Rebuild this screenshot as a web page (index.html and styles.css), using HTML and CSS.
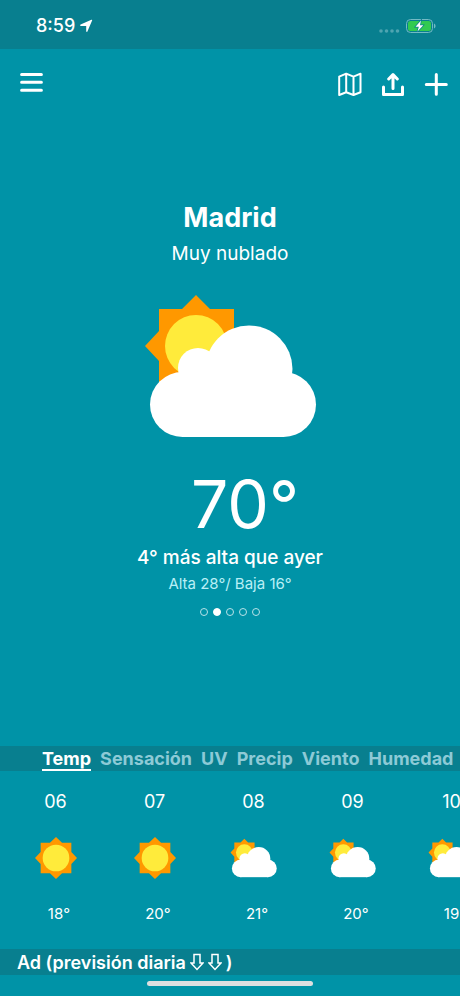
FILE: index.html
```
<!DOCTYPE html>
<html lang="es">
<head>
<meta charset="utf-8">
<meta name="viewport" content="width=device-width, initial-scale=1">
<title>Madrid</title>
<link rel="stylesheet" href="styles.css">
</head>
<body>
<svg class="defs" aria-hidden="true">
  <symbol id="sun" viewBox="0 0 104 104">
    <path fill="#ff9800" d="M52 0 67 14H90V37L104 52 90 67V90H67L52 104 37 90H14V67L0 52 14 37V14H37Z"/>
    <circle cx="52" cy="52" r="33" fill="#ffeb3b"/>
  </symbol>
  <symbol id="cloudy" viewBox="0 0 174 144">
    <path fill="#ff9800" d="M53 1 67 15H91V89H16V67L2 52 16 37V15H39Z"/>
    <circle cx="53" cy="52" r="31" fill="#ffeb3b"/>
    <g fill="#fff">
      <circle cx="55" cy="74" r="20"/>
      <circle cx="106" cy="75" r="43.5"/>
      <circle cx="39.5" cy="110.5" r="32.5"/>
      <circle cx="140.5" cy="110.5" r="32.5"/>
      <path d="M39 78H141V143H39Z"/>
    </g>
  </symbol>
</svg>
<div class="app">
  <div class="status">
    <div class="clock">8:59
      <svg width="14" height="14" viewBox="0 0 14 14" aria-hidden="true"><path fill="#fff" d="M12.4.8Q13.5.5 13.1 1.6L8.4 12.4Q7.5 13.6 7.2 12V6.9H1.8Q.2 6.5 1.6 5.5Z"/></svg>
    </div>
    <div class="power">
      <svg width="22" height="4" viewBox="0 0 22 4" aria-hidden="true"><g fill="#4fa5b1"><circle cx="3" cy="2" r="1.8"/><circle cx="8.5" cy="2" r="1.8"/><circle cx="14" cy="2" r="1.8"/><circle cx="19.5" cy="2" r="1.8"/></g></svg>
      <svg width="30" height="14" viewBox="0 0 30 14" aria-hidden="true"><rect x=".5" y=".5" width="26" height="13" rx="4" fill="none" stroke="#73bac4"/><rect x="2" y="2" width="23" height="10" rx="2.5" fill="#32ca50"/><path fill="#73bac4" d="M28 4.5Q29.6 5.4 29.6 7T28 9.5Z"/><path fill="#fff" stroke="#087f8f" stroke-width="1.4" paint-order="stroke" d="M15 1.5 9.5 7.8H12.8L11.5 12.5 17.3 6.2H14Z"/></svg>
    </div>
  </div>
  <header class="toolbar">
    <button type="button" aria-label="Menú"><svg width="24" height="24" viewBox="0 0 24 24"><path class="line heavy" d="M1.6 2.5H21.4M1.6 10.3H21.4M1.6 18.2H21.4"/></svg></button>
    <div class="actions">
      <button type="button" aria-label="Mapa"><svg width="24" height="24" viewBox="0 0 24 24"><path class="line" d="M1.2 4.7 8.2 1.7 15.5 4.7 22.5 1.7V20.2L15.5 23 8.2 20.2 1.2 23ZM8.2 1.7V20.2M15.5 4.7V23"/></svg></button>
      <button type="button" aria-label="Compartir"><svg width="24" height="24" viewBox="0 0 24 24"><path class="line heavy" d="M2.5 15V22.6H21.5V15M12 16.5V3M7.7 7 12 2.6 16.3 7"/></svg></button>
      <button type="button" aria-label="Añadir"><svg width="24" height="24" viewBox="0 0 24 24"><path class="line heavy" d="M12.3 2.5V22.3M2.3 12.5H22.3"/></svg></button>
    </div>
  </header>
  <main class="current">
    <h1>Madrid</h1>
    <p class="condition">Muy nublado</p>
    <svg class="hero" role="img" aria-label="Muy nublado"><use href="#cloudy"/></svg>
    <p class="degrees">70<span class="hang">°</span></p>
    <p class="compare">4° más alta que ayer</p>
    <p class="range">Alta 28°/ Baja 16°</p>
    <div class="dots"><i></i><i class="on"></i><i></i><i></i><i></i></div>
  </main>
  <nav class="tabs">
    <button type="button" class="active">Temp</button>
    <button type="button">Sensación</button>
    <button type="button">UV</button>
    <button type="button">Precip</button>
    <button type="button">Viento</button>
    <button type="button">Humedad</button>
  </nav>
  <section class="hours">
    <div class="hour"><span>06</span><svg class="icon"><use href="#sun"/></svg><small>18<span class="hang">°</span></small></div>
    <div class="hour"><span>07</span><svg class="icon"><use href="#sun"/></svg><small>20<span class="hang">°</span></small></div>
    <div class="hour"><span>08</span><svg class="icon cloud"><use href="#cloudy"/></svg><small>21<span class="hang">°</span></small></div>
    <div class="hour"><span>09</span><svg class="icon cloud"><use href="#cloudy"/></svg><small>20<span class="hang">°</span></small></div>
    <div class="hour"><span>10</span><svg class="icon cloud"><use href="#cloudy"/></svg><small>19<span class="hang">°</span></small></div>
  </section>
  <div class="ad">Ad (previsión diaria
    <svg width="14" height="18" viewBox="0 0 14 18" aria-hidden="true"><path class="arrow" d="M4 1.5H10V10H13L7 16.5 1 10H4Z"/></svg>
    <svg width="14" height="18" viewBox="0 0 14 18" aria-hidden="true"><path class="arrow" d="M4 1.5H10V10H13L7 16.5 1 10H4Z"/></svg>
    <span>)</span>
  </div>
  <div class="home"></div>
</div>
</body>
</html>
```
FILE: styles.css
```
* { box-sizing: border-box; }
body {
  margin: 0;
  background: #0093a7;
  color: #fff;
  font-family: Inter, "Liberation Sans", sans-serif;
}
h1, p { margin: 0; font-weight: 400; }
svg { display: block; flex: none; }
button {
  border: 0;
  padding: 0;
  background: none;
  color: inherit;
  font: inherit;
  cursor: pointer;
}
.defs { position: absolute; width: 0; height: 0; }
.line {
  fill: none;
  stroke: #fff;
  stroke-width: 2;
  stroke-linecap: round;
  stroke-linejoin: round;
}
.heavy { stroke-width: 3; }
.arrow { fill: none; stroke: #fff; stroke-width: 1.5; }
.hang { display: inline-block; width: 0; }

.app {
  display: flex;
  flex-direction: column;
  min-height: 100vh;
  overflow: hidden;
}
.status {
  display: flex;
  justify-content: space-between;
  align-items: center;
  height: 49px;
  padding: 2px 24px 0 36px;
  background: #087f8f;
}
.clock {
  display: flex;
  align-items: center;
  gap: 4px;
  font-size: 18px;
  font-weight: 500;
}
.power { display: flex; align-items: flex-end; gap: 6px; }
.toolbar {
  display: flex;
  justify-content: space-between;
  padding: 23px 12px 0 20px;
}
.actions { display: flex; gap: 19px; }
.current {
  display: flex;
  flex: 1;
  flex-direction: column;
  align-items: center;
  padding-top: 104px;
}
h1 { font-size: 27px; line-height: 36px; font-weight: 700; }
.condition { margin-top: 4px; font-size: 19px; line-height: 28px; }
.hero { width: 174px; height: 144px; margin-top: 26px; }
.degrees { margin-top: 28px; font-size: 66px; line-height: 76px; font-weight: 400; }
.compare { margin-top: 2px; font-size: 19px; line-height: 28px; font-weight: 500; }
.range { font-size: 15px; line-height: 24px; color: #b9eff6; }
.dots { display: flex; gap: 5px; margin-top: 12px; }
.dots i { width: 8px; height: 8px; border: 1px solid #b9e2e8; border-radius: 50%; }
.dots .on { border-color: #fff; background: #fff; }

.tabs {
  display: flex;
  gap: 9px;
  height: 25px;
  padding-left: 42px;
  background: #087f8f;
  color: #8dcad6;
  font-size: 18px;
  line-height: 25px;
  font-weight: 700;
}
.tabs button { flex: none; height: 25px; border-bottom: 2px solid transparent; }
.tabs .active { border-color: #fff; color: #fff; }
.hours {
  display: grid;
  grid-auto-flow: column;
  grid-auto-columns: 99px;
  padding: 16px 0 20px 6px;
}
.hour { display: flex; flex-direction: column; align-items: center; }
.hour > span { font-size: 18px; line-height: 30px; }
.icon { width: 42px; height: 42px; margin: 20px 0; }
.cloud { width: 47px; }
.hour small { font-size: 15px; line-height: 30px; }
.ad {
  display: flex;
  align-items: center;
  gap: 4px;
  height: 26px;
  padding-left: 17px;
  background: #087f8f;
  font-size: 18px;
  font-weight: 600;
}
.home {
  align-self: center;
  width: 36%;
  height: 5px;
  margin: 6px 0 10px;
  border-radius: 3px;
  background: #dcdfe0;
}
```
